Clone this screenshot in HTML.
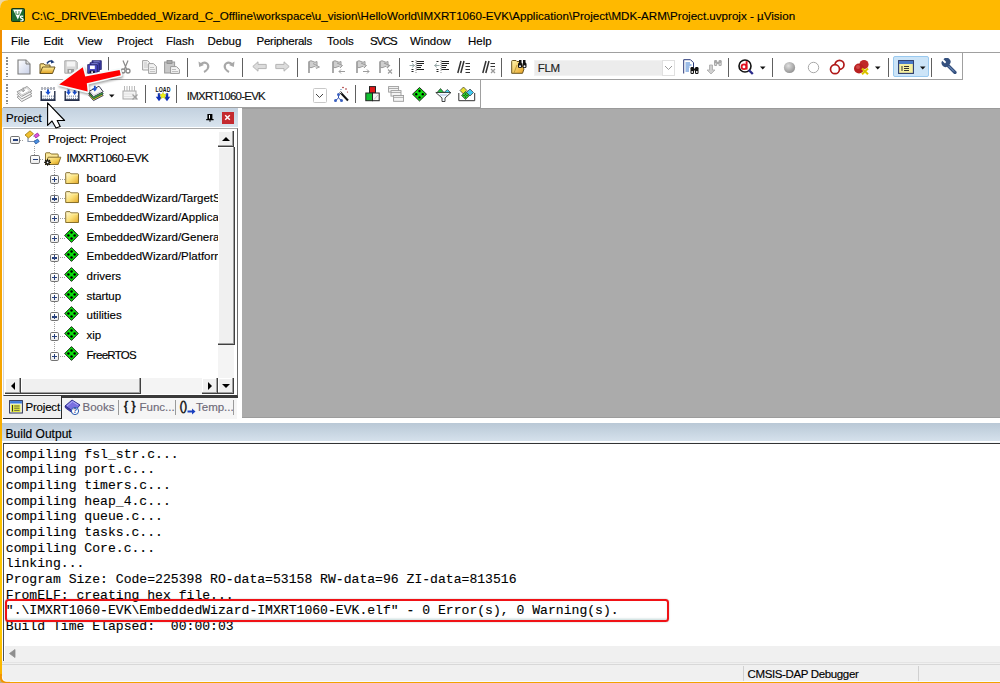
<!DOCTYPE html>
<html><head><meta charset="utf-8">
<style>
*{margin:0;padding:0;box-sizing:border-box}
html,body{width:1000px;height:683px;overflow:hidden;background:#fff}
body{position:relative;font-family:"Liberation Sans",sans-serif;color:#000}
.a{position:absolute}
.t{position:absolute;white-space:pre;line-height:1;-webkit-text-stroke:0.15px currentColor}
#title{left:0;top:0;width:1000px;height:30px;background:#FFB900}
#menu{left:0;top:30px;width:1000px;height:22px;background:#fff}
.mi{position:absolute;top:36px;font-size:11.5px;white-space:pre;line-height:1;-webkit-text-stroke:0.15px #000}
.sep{position:absolute;width:1px;background:#6d6d6d}
.grip{position:absolute;width:1.6px;background:repeating-linear-gradient(to bottom,#8c8c8c 0 1.6px,transparent 1.6px 3.2px)}
.sb{background:#f0f0f0;border-right:1.3px solid #404040;border-bottom:1.3px solid #404040;box-shadow:inset -1px -1px 0 #a0a0a0, inset 1px 1px 0 #fff}
.xb{width:9.2px;height:8.8px;border:1.5px solid #737373;border-radius:1.8px;background:linear-gradient(#fff,#ececec)}
.dv{width:1px;background:repeating-linear-gradient(to bottom,#a0a0a0 0 1px,transparent 1px 2px)}
.dh{height:1px;background:repeating-linear-gradient(to right,#a0a0a0 0 1px,transparent 1px 2px)}
.tree{position:absolute;font-size:11.5px;white-space:pre;line-height:1;-webkit-text-stroke:0.15px #000}
.out{position:absolute;left:5.8px;font-family:"Liberation Mono",monospace;font-size:13.1px;white-space:pre;line-height:15.69px;color:#000;-webkit-text-stroke:0.12px #000}
</style></head><body>

<!-- title bar -->
<div id="title" class="a"></div>
<svg class="a" style="left:10.5px;top:7.6px" width="14" height="14" viewBox="0 0 14 14">
<rect x="0.5" y="0.5" width="13" height="13" rx="1" fill="#1d6a30" stroke="#0a2a10" stroke-width="0.9"/>
<path d="M2 1.5H11.5L6.8 11.5Z" fill="#fff"/>
<path d="M5 3v3.5M5.2 6q1.5 0.8 2.8 0M8 3v3.5" stroke="#2a7a3a" stroke-width="0.9" fill="none"/>
<path d="M12.2 8.3q-2.5-0.8-2.8 0.8q0.2 1.2 1.5 1.4q1.4 0.3 1.2 1.5q-0.6 1.3-2.8 0.8" stroke="#fff" stroke-width="1.3" fill="none"/>
</svg>
<div class="t" style="left:31.5px;top:9.5px;font-size:11.6px;color:#000">C:\C_DRIVE\Embedded_Wizard_C_Offline\workspace\u_vision\HelloWorld\IMXRT1060-EVK\Application\Project\MDK-ARM\Project.uvprojx - µVision</div>

<!-- menu -->
<div id="menu" class="a"></div>
<div class="a" style="left:0;top:52px;width:1000px;height:1px;background:#a0a0a0"></div>
<div class="mi" style="left:11px">File</div>
<div class="mi" style="left:43.5px">Edit</div>
<div class="mi" style="left:77.5px">View</div>
<div class="mi" style="left:117px">Project</div>
<div class="mi" style="left:166px">Flash</div>
<div class="mi" style="left:207.5px">Debug</div>
<div class="mi" style="left:256.5px;letter-spacing:-0.25px">Peripherals</div>
<div class="mi" style="left:327px">Tools</div>
<div class="mi" style="left:370px;letter-spacing:-1.2px">SVCS</div>
<div class="mi" style="left:410px">Window</div>
<div class="mi" style="left:468px">Help</div>

<!-- toolbars -->
<div class="a" style="left:3px;top:79px;width:959px;height:1px;background:#a0a0a0"></div>
<div class="a" style="left:962px;top:53px;width:1px;height:27px;background:#a0a0a0"></div>
<div class="a" style="left:3px;top:106.5px;width:477.5px;height:1px;background:#a0a0a0"></div>
<div class="a" style="left:480.3px;top:80px;width:1px;height:27.5px;background:#a0a0a0"></div>
<div class="grip" style="left:6px;top:57px;height:20px"></div>
<div class="grip" style="left:6px;top:84px;height:20px"></div>

<svg class="a" style="left:17px;top:58.5px" width="14" height="16" viewBox="0 0 14 16"><defs><linearGradient id="nf" x1="0" y1="0" x2="1" y2="1"><stop offset="0" stop-color="#ffffff"/><stop offset="1" stop-color="#c8d0e8"/></linearGradient></defs><path d="M1 15V1H9L13 5V15Z" fill="url(#nf)" stroke="#7a7a7a" stroke-width="1.1"/><path d="M9 1V5H13" fill="#e0e0e0" stroke="#7a7a7a" stroke-width="1"/></svg>
<svg class="a" style="left:39px;top:58.5px" width="17" height="16" viewBox="0 0 17 16"><defs><linearGradient id="of" x1="0" y1="0" x2="0" y2="1"><stop offset="0" stop-color="#fff0a0"/><stop offset="1" stop-color="#e0a020"/></linearGradient></defs><path d="M1 14.5V5.5Q1 4.8 1.7 4.8H5L6 6H11V8" fill="#fbe38a" stroke="#6b5520" stroke-width="1"/><path d="M1 14.5L3.6 8H16L13.5 14.5Z" fill="url(#of)" stroke="#6b5520" stroke-width="1"/><path d="M8 4.5Q10 0.8 13.5 2.5" stroke="#1d3d7a" stroke-width="1.6" fill="none"/><path d="M12.2 0.8L15.6 3.2L12 4.6Z" fill="#1d3d7a"/></svg>
<svg class="a" style="left:64px;top:59.5px" width="14" height="14" viewBox="0 0 14 14"><path d="M0.8 13.2V0.8H11.6L13.2 2.4V13.2Z" fill="#d8d8d8" stroke="#a8a8a8" stroke-width="1"/><rect x="3" y="1.5" width="8" height="5" fill="#f4f4f4"/><rect x="3.5" y="9" width="6.5" height="4" fill="#9a9a9a"/><rect x="5" y="10" width="2" height="2.5" fill="#e8e8e8"/></svg>
<svg class="a" style="left:87px;top:59.5px" width="15" height="14" viewBox="0 0 15 14"><path d="M5 8V0.7H14.3V9.5H12Z" fill="#3a3aa0" stroke="#22226a" stroke-width="0.8"/><rect x="6.5" y="1.6" width="6" height="1.3" fill="#b8c0ff"/><path d="M3 10V2.7H12.3V11.5H10Z" fill="#4242ae" stroke="#22226a" stroke-width="0.8"/><rect x="4.5" y="3.6" width="6" height="1.3" fill="#c0c8ff"/><path d="M0.7 13.3V4.6H10.3V13.3Z" fill="#4a4ac0" stroke="#1e1e60" stroke-width="0.8"/><rect x="3" y="5.6" width="4.8" height="3.4" fill="#fff"/><rect x="2.6" y="10.6" width="5.2" height="2.7" fill="#101030"/><rect x="4.2" y="11.3" width="1.8" height="1.6" fill="#eee"/></svg>
<div class="a" style="left:108.10px;top:57px;width:1.1px;height:20px;background:#606060"></div>
<svg class="a" style="left:120px;top:59.5px" width="11" height="14" viewBox="0 0 11 14"><path d="M3 0.5L6.5 9M8 0.5L4.5 9" stroke="#8a8a8a" stroke-width="1.2" fill="none"/><circle cx="3" cy="11" r="2" fill="none" stroke="#8a8a8a" stroke-width="1.3"/><circle cx="8" cy="11" r="2" fill="none" stroke="#8a8a8a" stroke-width="1.3"/></svg>
<svg class="a" style="left:142px;top:59.5px" width="16" height="14" viewBox="0 0 16 14"><path d="M0.6 10V0.6H5.5L7.5 2.6V10Z" fill="#f2f2f2" stroke="#a0a0a0" stroke-width="1"/><path d="M6.6 13.4V3.6H11.5L14.4 6.5V13.4Z" fill="#f2f2f2" stroke="#a0a0a0" stroke-width="1"/><path d="M8 7.5h4M8 9.5h5M8 11.5h5M2 3h3M2 5h4M2 7h4" stroke="#b8b8b8" stroke-width="0.8"/></svg>
<svg class="a" style="left:164px;top:59.5px" width="17" height="14" viewBox="0 0 17 14"><rect x="0.6" y="2" width="10" height="11" fill="#c8c8c8" stroke="#9a9a9a" stroke-width="1"/><rect x="3" y="0.5" width="5" height="3" fill="#a8a8a8" stroke="#8a8a8a" stroke-width="0.8"/><path d="M6.6 13.4V6.6H12.5L15.4 9.5V13.4Z" fill="#f4f4f4" stroke="#9a9a9a" stroke-width="1"/><path d="M8 9.5h4M8 11.5h6" stroke="#b0b0b0" stroke-width="0.8"/></svg>
<div class="a" style="left:186.50px;top:57.5px;width:1.1px;height:19.0px;background:#606060"></div>
<svg class="a" style="left:197.5px;top:60px" width="13" height="13" viewBox="0 0 13 13"><path d="M3 4Q6 1.5 9 3.5Q11.5 6 9.5 9Q8 11 6 12" stroke="#a8a8a8" stroke-width="2" fill="none"/><path d="M0.5 1.5L1.2 7L6 5Z" fill="#a8a8a8"/></svg>
<svg class="a" style="left:222px;top:60px" width="13" height="13" viewBox="0 0 13 13"><path d="M10 4Q7 1.5 4 3.5Q1.5 6 3.5 9Q5 11 7 12" stroke="#a8a8a8" stroke-width="2" fill="none"/><path d="M12.5 1.5L11.8 7L7 5Z" fill="#a8a8a8"/></svg>
<div class="a" style="left:241.90px;top:57.5px;width:1.1px;height:19.0px;background:#606060"></div>
<svg class="a" style="left:252px;top:60.5px" width="15" height="11" viewBox="0 0 15 11"><path d="M0.8 5.5L6 0.8V3.4H14.2V7.6H6V10.2Z" fill="#dcdcdc" stroke="#b4b4b4" stroke-width="1"/></svg>
<svg class="a" style="left:275px;top:60.5px" width="15" height="11" viewBox="0 0 15 11"><path d="M14.2 5.5L9 0.8V3.4H0.8V7.6H9V10.2Z" fill="#dcdcdc" stroke="#b4b4b4" stroke-width="1"/></svg>
<div class="a" style="left:296.90px;top:57.5px;width:1.1px;height:19.0px;background:#606060"></div>
<svg class="a" style="left:306.5px;top:59.5px" width="15" height="14" viewBox="0 0 15 14"><path d="M2 13V1.5Q4 0 6 1.5T10 1.5V7Q8 5.5 6 7T2 7" fill="#cfcfcf" stroke="#9c9c9c" stroke-width="1"/><path d="M2 1.5V13" stroke="#9c9c9c" stroke-width="1.4"/><path d="M6 3.5L12.5 7L9 8.5" fill="#cfcfcf" stroke="#9c9c9c" stroke-width="0.9"/></svg>
<svg class="a" style="left:330.5px;top:59.5px" width="15" height="14" viewBox="0 0 15 14"><path d="M2 13V1.5Q4 0 6 1.5T10 1.5V7Q8 5.5 6 7T2 7" fill="#cfcfcf" stroke="#9c9c9c" stroke-width="1"/><path d="M2 1.5V13" stroke="#9c9c9c" stroke-width="1.4"/><path d="M6 3L11.5 5.5L9 8M8 11.5h6M8 11.5l2-2M8 11.5l2 2" fill="#cfcfcf" stroke="#9c9c9c" stroke-width="1"/></svg>
<svg class="a" style="left:354.5px;top:59.5px" width="15" height="14" viewBox="0 0 15 14"><path d="M2 13V1.5Q4 0 6 1.5T10 1.5V7Q8 5.5 6 7T2 7" fill="#cfcfcf" stroke="#9c9c9c" stroke-width="1"/><path d="M2 1.5V13" stroke="#9c9c9c" stroke-width="1.4"/><path d="M6 3L11.5 5.5L9 8M8 11.5h6M14 11.5l-2-2M14 11.5l-2 2" fill="#cfcfcf" stroke="#9c9c9c" stroke-width="1"/></svg>
<svg class="a" style="left:377.5px;top:59.5px" width="16" height="14" viewBox="0 0 16 14"><path d="M2 13V1.5Q4 0 6 1.5T10 1.5V7Q8 5.5 6 7T2 7" fill="#cfcfcf" stroke="#9c9c9c" stroke-width="1"/><path d="M2 1.5V13" stroke="#9c9c9c" stroke-width="1.4"/><path d="M6 3L11.5 5.5L9 8M10 9.5l4 4M14 9.5l-4 4" fill="#cfcfcf" stroke="#9c9c9c" stroke-width="1.1"/></svg>
<div class="a" style="left:398.90px;top:57.5px;width:1.1px;height:19.0px;background:#606060"></div>
<svg class="a" style="left:409px;top:59px" width="16" height="15" viewBox="0 0 16 15"><path d="M7 1V14" stroke="#777" stroke-width="0.8" stroke-dasharray="1 1"/><path d="M2.5 2.5H4.5M7.5 2.5H15M7.5 4.5H15M7.5 6.5H13M7.5 8.5H12M2.5 10.5H4.5M7.5 10.5H15M2.5 12.5H4.5" stroke="#222" stroke-width="1.2"/><path d="M0.5 6.5H5.5M5.5 6.5L3 4.5M5.5 6.5L3 8.5" stroke="#9aa" stroke-width="1"/></svg>
<svg class="a" style="left:433.5px;top:59px" width="16" height="15" viewBox="0 0 16 15"><path d="M7 1V14" stroke="#777" stroke-width="0.8" stroke-dasharray="1 1"/><path d="M2.5 2.5H4.5M7.5 2.5H15M7.5 4.5H15M7.5 6.5H13M7.5 8.5H12M2.5 10.5H4.5M7.5 10.5H15M2.5 12.5H4.5" stroke="#222" stroke-width="1.2"/><path d="M0.5 6.5H5.5M0.5 6.5L3 4.5M0.5 6.5L3 8.5" stroke="#9aa" stroke-width="1"/></svg>
<svg class="a" style="left:457px;top:59.5px" width="15" height="14" viewBox="0 0 15 14"><path d="M0.8 13L4 1M3.8 13L7 1" stroke="#333" stroke-width="1.5"/><path d="M8.5 3.5H13M8.5 6.5H13M8.5 9.5H13M8.5 12.5H13" stroke="#333" stroke-width="1.1"/></svg>
<svg class="a" style="left:481.5px;top:59.5px" width="15" height="14" viewBox="0 0 15 14"><path d="M0.8 13L4 1M3.8 13L7 1" stroke="#333" stroke-width="1.5"/><path d="M8.5 3.5H13M8.5 6.5H13" stroke="#333" stroke-width="1.1"/><path d="M9 9l4 4M13 9l-4 4" stroke="#999" stroke-width="1.3"/></svg>
<div class="a" style="left:501.20px;top:57.5px;width:1.1px;height:19.0px;background:#606060"></div>
<svg class="a" style="left:511px;top:59px" width="17" height="15" viewBox="0 0 17 15"><defs><linearGradient id="ff" x1="0" y1="0" x2="1" y2="1"><stop offset="0" stop-color="#fff8b0"/><stop offset="1" stop-color="#e8a020"/></linearGradient></defs><path d="M0.7 14.3V2.3Q0.7 1.5 1.5 1.5H5L6 2.5H9L13 10L11.5 14.3Z" fill="url(#ff)" stroke="#6b5520" stroke-width="1"/><path d="M3 14L6 6" stroke="#b09030" stroke-width="0.8"/><g fill="#111"><rect x="8" y="1" width="2.5" height="3"/><rect x="12" y="1" width="2.5" height="3"/><rect x="7" y="3.5" width="4" height="5.5" rx="1.5"/><rect x="11.5" y="3.5" width="4" height="5.5" rx="1.5"/></g><circle cx="9" cy="7.2" r="1" fill="#fff"/><circle cx="13.5" cy="7.2" r="1" fill="#fff"/></svg>
<div class="a" style="left:533.5px;top:60.3px;width:129px;height:16px;background:#ececec;border:1px solid #f2f2f2"></div>
<div class="a" style="left:662px;top:60.3px;width:13px;height:16px;background:#fff;border:1px solid #e0e0e0"></div>
<svg class="a" style="left:664px;top:65px" width="9" height="6" viewBox="0 0 9 6"><path d="M1 1L4.5 4.5L8 1" stroke="#9a9a9a" stroke-width="1" fill="none"/></svg>
<div class="t" style="left:537.8px;top:62.7px;font-size:11.5px;color:#222;letter-spacing:-0.4px">FLM</div>
<svg class="a" style="left:682.5px;top:58.5px" width="17" height="16" viewBox="0 0 17 16"><path d="M0.7 14.5V0.7H7.5L10.5 3.7V9" fill="#fff" stroke="#2a3a7a" stroke-width="1"/><path d="M2.5 4H7M2.5 6H8.5M2.5 8H6.5M2.5 10H6M2.5 12H6" stroke="#3a7ad0" stroke-width="1.1"/><g fill="#111"><rect x="7.5" y="8" width="3.5" height="7" rx="1.2"/><rect x="12" y="8" width="3.5" height="7" rx="1.2"/><rect x="10" y="9.5" width="3" height="2"/></g><circle cx="9.2" cy="13" r="0.9" fill="#fff"/><circle cx="13.8" cy="13" r="0.9" fill="#fff"/></svg>
<svg class="a" style="left:705.5px;top:58.5px" width="17" height="16" viewBox="0 0 17 16"><path d="M3.5 6V11H1L5 15L9 11H6.5V6Z" fill="#d0d0d0" stroke="#aaa" stroke-width="0.8"/><g fill="#a8a8a8"><rect x="8" y="1" width="3.2" height="6" rx="1.2"/><rect x="12.5" y="1" width="3.2" height="6" rx="1.2"/><rect x="10" y="3" width="3" height="2"/></g><circle cx="9.6" cy="5" r="0.8" fill="#eee"/><circle cx="14.1" cy="5" r="0.8" fill="#eee"/></svg>
<div class="a" style="left:727.70px;top:57.5px;width:1.1px;height:19.0px;background:#606060"></div>
<svg class="a" style="left:737.5px;top:58.5px" width="17" height="16" viewBox="0 0 17 16"><circle cx="7" cy="7" r="6" fill="#fff" stroke="#111" stroke-width="1.6"/><path d="M10.8 11L14.8 15" stroke="#2a2a8a" stroke-width="2.4"/><path d="M8.6 2.2V10.5" stroke="#e01020" stroke-width="1.9"/><circle cx="6" cy="7.8" r="2.4" fill="none" stroke="#e01020" stroke-width="1.8"/></svg>
<svg class="a" style="left:760px;top:65.5px" width="6" height="4" viewBox="0 0 6 4"><path d="M0 0.5h5.5L2.75 3.5z" fill="#111"/></svg>
<div class="a" style="left:771.90px;top:57.5px;width:1.1px;height:19.0px;background:#606060"></div>
<svg class="a" style="left:783px;top:60.5px" width="13" height="13" viewBox="0 0 13 13"><defs><radialGradient id="gc" cx=".4" cy=".35" r=".7"><stop offset="0" stop-color="#e0e0e0"/><stop offset="1" stop-color="#8e8e8e"/></radialGradient></defs><circle cx="6.5" cy="6.5" r="5.6" fill="url(#gc)"/></svg>
<svg class="a" style="left:807px;top:60.5px" width="13" height="13" viewBox="0 0 13 13"><circle cx="6.5" cy="6.5" r="5.2" fill="#fff" stroke="#a8a8a8" stroke-width="1"/></svg>
<svg class="a" style="left:828.5px;top:58.5px" width="17" height="16" viewBox="0 0 17 16"><circle cx="10.5" cy="5.8" r="4.5" fill="none" stroke="#b01818" stroke-width="1.7"/><circle cx="6" cy="10.2" r="4.5" fill="#fff" stroke="#b01818" stroke-width="1.7"/></svg>
<svg class="a" style="left:852.5px;top:58.5px" width="18" height="16" viewBox="0 0 18 16"><circle cx="11" cy="5.5" r="4.6" fill="#c02828"/><circle cx="6" cy="9.5" r="5" fill="#b82020"/><circle cx="5" cy="8" r="2" fill="#e06060" opacity=".6"/><path d="M9 9.5L15 15.2M15 9.5L9 15.2" stroke="#e8d000" stroke-width="2.2"/><path d="M9 9.5L15 15.2M15 9.5L9 15.2" stroke="#7a6a00" stroke-width="0.5" opacity=".5"/></svg>
<svg class="a" style="left:875px;top:65.5px" width="6" height="4" viewBox="0 0 6 4"><path d="M0 0.5h5.5L2.75 3.5z" fill="#111"/></svg>
<div class="a" style="left:887.50px;top:57.5px;width:1.1px;height:19.0px;background:#606060"></div>
<div class="a" style="left:893px;top:55.6px;width:36px;height:21.5px;background:#cce4f7;border:1px solid #99c9ef;border-radius:2px"></div>
<svg class="a" style="left:897.5px;top:59.5px" width="16" height="14" viewBox="0 0 16 14"><rect x="0.6" y="0.6" width="14.8" height="12.8" fill="#f6f0a0" stroke="#2a3a6a" stroke-width="1.1"/><rect x="1" y="1" width="14" height="3" fill="#4a7ac8"/><path d="M4 6v5M6 6.5h5M6 8.5h5M6 10.5h5" stroke="#333" stroke-width="1"/></svg>
<svg class="a" style="left:919.5px;top:65.5px" width="6" height="4" viewBox="0 0 6 4"><path d="M0 0.5h5.5L2.75 3.5z" fill="#111"/></svg>
<div class="a" style="left:931.10px;top:57.5px;width:1.1px;height:19.0px;background:#606060"></div>
<svg class="a" style="left:941px;top:58px" width="16" height="16" viewBox="0 0 16 16"><g transform="translate(16,0) scale(-1,1)"><path d="M2 14.5L9 7.5" stroke="#34507e" stroke-width="3.2" stroke-linecap="round"/><path d="M7.5 6.5A4 4 0 0 1 13.5 1.2L10.8 4L12 5.5L14.8 2.8A4 4 0 0 1 9.5 8.5Z" fill="#34507e"/><path d="M3 13.5L8.5 8" stroke="#8aa8d8" stroke-width="0.9"/></g></svg>
<svg class="a" style="left:15.5px;top:85.5px" width="17" height="17" viewBox="0 0 17 17"><g fill="#f6f6f6" stroke="#8c8c8c" stroke-width="0.9" stroke-linejoin="round"><path d="M1.1 11L11 5.7L15.9 10.1L5.7 15.6Z"/><path d="M1.1 8.4L11 3.1L15.9 7.5L5.7 13Z"/><path d="M1.1 5.8L11 0.5L15.9 4.9L5.7 10.4Z"/></g><path d="M3.2 6L10.6 2.1L13.6 4.9L6 8.9Z" fill="#fff" stroke="#b0b0b0" stroke-width="0.6"/><path d="M7.2 1.5V5.5M5.6 4L7.2 5.8L8.8 4" stroke="#999" stroke-width="1" fill="none"/></svg>
<svg class="a" style="left:39.5px;top:85.5px" width="16" height="15" viewBox="0 0 16 15"><path d="M1.2 5V14H14.8V5" fill="#fff" stroke="#1a2440" stroke-width="1.35"/><path d="M0.6 14.3H15.4" stroke="#1a2440" stroke-width="1"/><g fill="#6a7898"><rect x="2.6" y="9.6" width="1.1" height="1.1"/><rect x="4.7" y="9.6" width="1.1" height="1.1"/><rect x="6.8" y="9.6" width="1.1" height="1.1"/><rect x="8.9" y="9.6" width="1.1" height="1.1"/><rect x="11.0" y="9.6" width="1.1" height="1.1"/><rect x="13.1" y="9.6" width="1.1" height="1.1"/><rect x="2.6" y="11.8" width="1.1" height="1.1"/><rect x="4.7" y="11.8" width="1.1" height="1.1"/><rect x="6.8" y="11.8" width="1.1" height="1.1"/><rect x="8.9" y="11.8" width="1.1" height="1.1"/><rect x="11.0" y="11.8" width="1.1" height="1.1"/><rect x="13.1" y="11.8" width="1.1" height="1.1"/></g><path d="M2 1V4M5 1V4M8 1V4M11 1V4M14 1V4" stroke="#5a6070" stroke-width="0.9"/><path d="M3.5 2.5h0.8M6.5 2.5h0.8M9.5 2.5h0.8M12.5 2.5h0.8" stroke="#9aa0b0" stroke-width="0.8"/><path d="M8 3.5V6.5" stroke="#1a50d0" stroke-width="2"/><path d="M5.2 5.8H10.8L8 9Z" fill="#1a50d0"/></svg>
<svg class="a" style="left:63.5px;top:85.5px" width="16" height="15" viewBox="0 0 16 15"><path d="M1.2 5V14H14.8V5" fill="#fff" stroke="#1a2440" stroke-width="1.35"/><path d="M0.6 14.3H15.4" stroke="#1a2440" stroke-width="1"/><g fill="#6a7898"><rect x="2.6" y="9.6" width="1.1" height="1.1"/><rect x="4.7" y="9.6" width="1.1" height="1.1"/><rect x="6.8" y="9.6" width="1.1" height="1.1"/><rect x="8.9" y="9.6" width="1.1" height="1.1"/><rect x="11.0" y="9.6" width="1.1" height="1.1"/><rect x="13.1" y="9.6" width="1.1" height="1.1"/><rect x="2.6" y="11.8" width="1.1" height="1.1"/><rect x="4.7" y="11.8" width="1.1" height="1.1"/><rect x="6.8" y="11.8" width="1.1" height="1.1"/><rect x="8.9" y="11.8" width="1.1" height="1.1"/><rect x="11.0" y="11.8" width="1.1" height="1.1"/><rect x="13.1" y="11.8" width="1.1" height="1.1"/></g><path d="M3 2h10" stroke="#9aa0b0" stroke-width="0.8" stroke-dasharray="1 1.5"/><path d="M4.5 3.5V6.5M10.7 3.5V6.5" stroke="#1a50d0" stroke-width="2"/><path d="M2 5.8H7L4.5 9ZM8.2 5.8H13.2L10.7 9Z" fill="#1a50d0"/></svg>
<svg class="a" style="left:88px;top:85px" width="16" height="17" viewBox="0 0 16 17"><path d="M0.8 10.2L5.5 15.6L15.2 10.5L10.5 5.2Z" fill="#e8e030" stroke="#30305a" stroke-width="0.9" stroke-linejoin="round"/><path d="M0.8 8.4L5.5 13.8L15.2 8.7L10.5 3.4Z" fill="#40b040" stroke="#204a30" stroke-width="0.9" stroke-linejoin="round"/><path d="M0.8 6.4L5.5 11.8L15.2 6.7L11 1.2Z" fill="#f8f8f8" stroke="#3a3a50" stroke-width="1" stroke-linejoin="round"/><path d="M2.5 6.5L5.8 10.2L13 6.5" stroke="#c8c8d0" stroke-width="0.8" fill="none"/><path d="M6.8 0.8V3.8" stroke="#1a50d0" stroke-width="1.8"/><path d="M4.2 3.2H9.4L6.8 6.4Z" fill="#1a50d0"/></svg>
<svg class="a" style="left:108.5px;top:93.5px" width="6" height="4" viewBox="0 0 6 4"><path d="M0 0.5h5.5L2.75 3.5z" fill="#111"/></svg>
<svg class="a" style="left:122px;top:85px" width="17" height="16" viewBox="0 0 17 16"><rect x="1" y="6" width="13" height="8" fill="#f4f4f4" stroke="#a8a8a8" stroke-width="1"/><path d="M2.5 1V6M5 1V6M7.5 1V6M10 1V6M12.5 1V6" stroke="#b8b8b8" stroke-width="1"/><path d="M2.5 9h10M2.5 11.5h10" stroke="#c8c8c8" stroke-width="0.8" stroke-dasharray="1 1"/><path d="M10.5 9.5L15.5 14.5M15.5 9.5L10.5 14.5" stroke="#a0a0a0" stroke-width="1.3"/></svg>
<div class="a" style="left:144.50px;top:84.5px;width:1.1px;height:18.5px;background:#606060"></div>
<svg class="a" style="left:154.5px;top:85.5px" width="16" height="16" viewBox="0 0 16 16"><text x="8" y="6" font-family="Liberation Sans" font-weight="bold" font-size="6.6" text-anchor="middle" fill="#111" letter-spacing="0.1" textLength="15" lengthAdjust="spacingAndGlyphs">LOAD</text><path d="M4 7.3V11.5M12 7.3V11.5" stroke="#1030b8" stroke-width="2.4"/><path d="M0.8 10.8H7.4L4 15.3ZM8.6 10.8H15.2L12 15.3Z" fill="#1030b8"/><path d="M8 6.3L9.1 8.3L11.4 8.6L9.8 10.2L10.3 12.6L8 11.4L5.7 12.6L6.2 10.2L4.6 8.6L6.9 8.3Z" fill="#eef010" stroke="#b0b010" stroke-width="0.4"/></svg>
<div class="a" style="left:175.70px;top:84.5px;width:1.1px;height:18.5px;background:#606060"></div>
<div class="t" style="left:186.8px;top:90.9px;font-size:11.5px;color:#111;letter-spacing:-0.75px">IMXRT1060-EVK</div>
<div class="a" style="left:312.5px;top:88px;width:14px;height:15px;background:#fff;border:1px solid #c8c8c8;border-radius:1.5px"></div>
<svg class="a" style="left:315px;top:93px" width="9" height="6" viewBox="0 0 9 6"><path d="M1 1L4.5 4.5L8 1" stroke="#444" stroke-width="1" fill="none"/></svg>
<svg class="a" style="left:333px;top:85.5px" width="17" height="16.5" viewBox="0 0 17 16.5"><path d="M7 6L15 14.5" stroke="#111" stroke-width="2"/><path d="M6 5.2L8.4 7.4" stroke="#fff" stroke-width="1"/><circle cx="10" cy="1.5" r="0.8" fill="#a02020"/><circle cx="13" cy="3" r="0.8" fill="#a02020"/><circle cx="8" cy="3.5" r="0.6" fill="#2060a0"/><circle cx="14.5" cy="6" r="0.6" fill="#a02020"/><path d="M5.5 9V12M5.5 12L2.5 14.5M5.5 12L8.5 14.5" stroke="#3050b0" stroke-width="1"/><circle cx="5.5" cy="8.5" r="1.5" fill="#3a60c0"/><circle cx="2.5" cy="14.5" r="1.5" fill="#3a60c0"/><circle cx="8.5" cy="14.5" r="1.5" fill="#3a60c0"/></svg>
<div class="a" style="left:354.90px;top:85px;width:1.1px;height:18px;background:#606060"></div>
<svg class="a" style="left:365px;top:86px" width="15.5" height="15.5" viewBox="0 0 15.5 15.5"><rect x="4.5" y="0.6" width="6" height="6.5" fill="#e01818" stroke="#222" stroke-width="1"/><rect x="0.8" y="7" width="6.7" height="7.7" fill="#10c030" stroke="#222" stroke-width="1"/><rect x="7.5" y="7" width="6.7" height="7.7" fill="#f4f4f4" stroke="#222" stroke-width="1"/><path d="M9 13.5L13 9" stroke="#aaa" stroke-width="0.6"/></svg>
<svg class="a" style="left:387.5px;top:85.5px" width="16.5" height="16" viewBox="0 0 16.5 16"><g fill="#f4f4f4" stroke="#9a9a9a" stroke-width="0.9"><rect x="0.6" y="0.6" width="10" height="5.5"/><rect x="3" y="4.6" width="10" height="5.5"/><rect x="5.6" y="9.5" width="10" height="5.8"/></g><path d="M0.6 2.5h10M3 6.5h10M5.6 11.4h10" stroke="#9a9a9a" stroke-width="0.8"/></svg>
<svg class="a" style="left:412px;top:87px" width="15" height="14.5" viewBox="0 0 15 14.5"><path d="M7.5 0.5L14.5 7.2L7.5 14L0.5 7.2Z" fill="#10dd10" stroke="#111" stroke-width="0.9"/><circle cx="7.5" cy="4" r="1.2"/><circle cx="4.2" cy="7.2" r="1.2"/><circle cx="10.8" cy="7.2" r="1.2"/><circle cx="7.5" cy="10.4" r="1.2"/></svg>
<svg class="a" style="left:435px;top:86.5px" width="17" height="15" viewBox="0 0 17 15"><path d="M0.8 5.5H16L10 11V14.5H7V11Z" fill="#f4fcff" stroke="#333" stroke-width="0.9"/><path d="M2 5.5L5.5 1.5L9 5.5Z" fill="#20c040" stroke="#333" stroke-width="0.7"/><path d="M9 5.5L12.5 2.5L15.5 5.5Z" fill="#40c8e8" stroke="#333" stroke-width="0.7"/><path d="M5 8L12 8" stroke="#9ad" stroke-width="0.8"/></svg>
<svg class="a" style="left:458px;top:86px" width="17.5" height="15.5" viewBox="0 0 17.5 15.5"><path d="M0.8 7V14.7H16.7V7" fill="#fff" stroke="#333" stroke-width="1"/><path d="M5.5 1L9 4.5L5.5 8L2 4.5Z" fill="#e8e030" stroke="#333" stroke-width="0.7"/><path d="M12 3L15.5 6.5L12 10L8.5 6.5Z" fill="#40c8f0" stroke="#333" stroke-width="0.7"/><path d="M7.5 5.5L11.5 9.5L7.5 13.5L3.5 9.5Z" fill="#30d030" stroke="#333" stroke-width="0.7"/><circle cx="7.5" cy="8" r="0.6"/><circle cx="6" cy="9.5" r="0.6"/><circle cx="9" cy="9.5" r="0.6"/><circle cx="7.5" cy="11" r="0.6"/></svg>
<!-- project panel -->
<div class="a" style="left:2px;top:107.5px;width:236px;height:19px;background:linear-gradient(#c3d1df,#d9e4ee)"></div>
<div class="t" style="left:6px;top:113px;font-size:11.5px">Project</div>
<svg class="a" style="left:205px;top:113px" width="10" height="10" viewBox="0 0 10 10"><path d="M2.4 1H7.4V6H8.6V7.2H5.5V8.8H4.5V7.2H1.2V6H2.4Z" fill="#000"/><rect x="4" y="2" width="1" height="3.6" fill="#fff"/></svg>
<div class="a" style="left:222px;top:112px;width:12px;height:12px;background:#c42a2f"></div>
<svg class="a" style="left:222px;top:112px" width="12" height="12" viewBox="0 0 12 12"><path d="M3.2 3.2l4.6 4.6M7.8 3.2l-4.6 4.6" stroke="#fff" stroke-width="1.45"/></svg>
<div class="a" style="left:2px;top:126.5px;width:236px;height:1.5px;background:#fff"></div>
<div class="a" style="left:2.5px;top:128px;width:235px;height:268px;border-top:1px solid #a9a9a9;border-right:1px solid #6b6b6b;border-bottom:1.5px solid #3a3a3a;border-left:1px solid #d6d6d6;background:#fff"></div>
<!-- v scrollbar -->
<div class="a" style="left:218px;top:131px;width:16px;height:247px;background:#f4f4f4"></div>
<div class="a sb" style="left:218px;top:131px;width:16px;height:16px"></div>
<svg class="a" style="left:218px;top:131px" width="16" height="16"><path d="M4 10h8l-4-4z" fill="#000"/></svg>
<div class="a sb" style="left:218px;top:147px;width:16.5px;height:197.5px"></div>
<div class="a sb" style="left:218px;top:378px;width:16px;height:16px"></div>
<svg class="a" style="left:218px;top:378px" width="16" height="16"><path d="M4 6h8l-4 4z" fill="#000"/></svg>
<!-- h scrollbar -->
<div class="a" style="left:4.5px;top:378px;width:213.5px;height:16px;background:#f4f4f4"></div>
<div class="a sb" style="left:4.5px;top:378px;width:16px;height:16px"></div>
<svg class="a" style="left:4.5px;top:378px" width="16" height="16"><path d="M10 4v8l-4-4z" fill="#000"/></svg>
<div class="a sb" style="left:20.5px;top:378px;width:120px;height:16px"></div>
<div class="a sb" style="left:202px;top:378px;width:16px;height:16px"></div>
<svg class="a" style="left:202px;top:378px" width="16" height="16"><path d="M6 4v8l4-4z" fill="#000"/></svg>
<!-- tabs -->
<div class="a" style="left:3px;top:396px;width:234px;height:23px;background:#f5f5f5"></div>
<div class="a" style="left:61px;top:396px;width:177px;height:1.5px;background:#3a3a3a"></div>
<div class="a" style="left:3px;top:396px;width:58.5px;height:22.5px;background:#efefef;border-right:1.5px solid #2a2a2a;border-bottom:1.5px solid #2a2a2a"></div>
<svg class="a" style="left:8.5px;top:399.5px" width="14" height="14" viewBox="0 0 14 14"><rect x="0.6" y="0.6" width="12.8" height="12.4" fill="#f8f8f0" stroke="#2a3050" stroke-width="1"/><rect x="1.1" y="1.1" width="11.8" height="2.4" fill="#3a78d8"/><rect x="2" y="4.5" width="9.5" height="7.5" fill="#e4ec40"/><path d="M3.5 5v6.5" stroke="#333" stroke-width="1"/><path d="M5.2 6h5.3M5.2 8.2h5.3M5.2 10.4h5.3" stroke="#444" stroke-width="0.8"/></svg>
<div class="t" style="left:25.5px;top:401.5px;font-size:11.5px;letter-spacing:-0.2px">Project</div>
<svg class="a" style="left:64px;top:398.5px" width="17" height="16" viewBox="0 0 17 16"><path d="M1 7L8 1L16 6L10 13Z" fill="#7a70e0" stroke="#2a2a8a" stroke-width="0.9"/><path d="M1 7L1.5 9L10 15L10 13Z" fill="#4a40b0" stroke="#2a2a8a" stroke-width="0.8"/><path d="M3 7L8.5 2.5L14 6" stroke="#c0c0ff" stroke-width="0.8" fill="none"/><circle cx="11" cy="12" r="3.6" fill="#fff" stroke="#2a5ab0" stroke-width="1"/><text x="11" y="14.4" font-family="Liberation Sans" font-weight="bold" font-size="6.5" text-anchor="middle" fill="#1a3a90">?</text></svg>
<div class="t" style="left:82.5px;top:401.5px;font-size:11.5px;color:#6e6a78">Books</div>
<div class="a" style="left:118px;top:400px;width:1px;height:15px;background:#9a9a9a"></div>
<div class="t" style="left:124px;top:400px;font-size:12px;color:#111;-webkit-text-stroke:0.5px #111">{</div><div class="t" style="left:131.5px;top:400px;font-size:12px;color:#111;-webkit-text-stroke:0.5px #111">}</div>
<div class="t" style="left:139.5px;top:401.5px;font-size:11.5px;color:#6e6a78">Func...</div>
<div class="a" style="left:175px;top:400px;width:1px;height:15px;background:#9a9a9a"></div>
<div class="t" style="left:179.5px;top:400px;font-size:12px;color:#111;-webkit-text-stroke:0.45px #111;letter-spacing:-0.2px">()</div>
<svg class="a" style="left:187px;top:407.5px" width="9" height="7" viewBox="0 0 9 7"><path d="M0.5 2.5H5V0.5L8.5 3.5L5 6.5V4.5H0.5Z" fill="#1a40c0"/></svg>
<div class="t" style="left:196px;top:401.5px;font-size:11.5px;color:#6e6a78">Temp...</div>
<div class="a" style="left:232.5px;top:400px;width:1px;height:15px;background:#9a9a9a"></div>

<div class="a" style="left:3px;top:129px;width:215px;height:249px;overflow:hidden"><div class="a" style="left:-3px;top:-129px;width:1000px;height:683px"><div class="a xb" style="left:10.40px;top:135.60px"></div><div class="a" style="left:12.50px;top:139.40px;width:5px;height:1.3px;background:#26407c"></div>
<div class="a dh" style="left:20.00px;top:139.50px;width:4.00px"></div>
<svg class="a" style="left:23.5px;top:130px" width="16" height="15" viewBox="0 0 16 15">
<path d="M4 6.5V11.5H10.5" stroke="#8090a8" stroke-width="1.2" fill="none"/>
<path d="M1 5L6 0.8L9.5 3.8L4.5 8Z" fill="#f0c030" stroke="#9a7810" stroke-width="0.8"/>
<path d="M10 5.5L13.5 3L15.3 5.5L11.8 8Z" fill="#e050e0" stroke="#8a208a" stroke-width="0.7"/>
<path d="M10 11.5L13.5 9L15.3 11.5L11.8 14Z" fill="#4a90e0" stroke="#1a4a9a" stroke-width="0.7"/>
<path d="M9.5 6.5L10.5 5.5M10 11L10.8 10.3" stroke="#8090a8" stroke-width="1"/></svg>
<div class="tree" style="left:48px;top:133.56px">Project: Project</div>
<div class="a dv" style="left:34.10px;top:146.00px;height:9.15px"></div>
<div class="a xb" style="left:30.40px;top:155.25px"></div><div class="a" style="left:32.50px;top:159.05px;width:5px;height:1.3px;background:#26407c"></div>
<div class="a dh" style="left:40.00px;top:159.15px;width:4.00px"></div>
<svg class="a" style="left:43.5px;top:151.5px" width="18" height="14" viewBox="0 0 18 14">
<defs><linearGradient id="ofg" x1="0" y1="0" x2="1" y2="1"><stop offset="0" stop-color="#fff4b8"/><stop offset=".6" stop-color="#f4cc50"/><stop offset="1" stop-color="#cf9010"/></linearGradient></defs>
<path d="M1.5 12V1.5Q1.5 0.8 2.2 0.8H6L7.2 2H13.5Q14.2 2 14.2 2.7V5" fill="#fbe89a" stroke="#7d6420" stroke-width="0.9"/>
<path d="M1.5 12.5L4.2 5.2H16.8L14.2 12.5Z" fill="url(#ofg)" stroke="#7d6420" stroke-width="0.9"/>
<g transform="translate(3.6,10.4)" fill="#111"><circle r="2.1"/><g stroke="#111" stroke-width="1.1"><path d="M0 -3.4V3.4M-3.4 0H3.4M-2.4 -2.4L2.4 2.4M2.4 -2.4L-2.4 2.4"/></g><circle r="0.9" fill="#fff"/></g></svg>
<div class="tree" style="left:66.4px;top:153.21px;letter-spacing:-0.45px">IMXRT1060-EVK</div>
<div class="a dv" style="left:54.00px;top:166.00px;height:190.15px"></div>
<div class="a xb" style="left:49.90px;top:174.90px"></div><div class="a" style="left:52.00px;top:178.70px;width:5px;height:1.3px;background:#26407c"></div><div class="a" style="left:53.85px;top:176.80px;width:1.3px;height:5px;background:#26407c"></div>
<div class="a dh" style="left:59.50px;top:178.80px;width:5.50px"></div>
<svg class="a" style="left:64.5px;top:171.70px" width="14.2" height="12.2" viewBox="0 0 15 13">
<defs><linearGradient id="fg2" x1="0" y1="0" x2="1" y2="1"><stop offset="0" stop-color="#fffbe0"/><stop offset=".5" stop-color="#fbe17a"/><stop offset="1" stop-color="#e2a82a"/></linearGradient></defs>
<path d="M0.7 12.3V1.4Q0.7 0.7 1.4 0.7H5.2L6.4 2H13.6Q14.3 2 14.3 2.7V12.3Z" fill="url(#fg2)" stroke="#7d6420" stroke-width="1"/>
<path d="M1.2 3.2H13.8" stroke="#fff2a8" stroke-width="0.8"/></svg>
<div class="tree" style="left:86.5px;top:172.86px;letter-spacing:0px">board</div>
<div class="a xb" style="left:49.90px;top:194.55px"></div><div class="a" style="left:52.00px;top:198.35px;width:5px;height:1.3px;background:#26407c"></div><div class="a" style="left:53.85px;top:196.45px;width:1.3px;height:5px;background:#26407c"></div>
<div class="a dh" style="left:59.50px;top:198.45px;width:5.50px"></div>
<svg class="a" style="left:64.5px;top:191.35px" width="14.2" height="12.2" viewBox="0 0 15 13">
<defs><linearGradient id="fg3" x1="0" y1="0" x2="1" y2="1"><stop offset="0" stop-color="#fffbe0"/><stop offset=".5" stop-color="#fbe17a"/><stop offset="1" stop-color="#e2a82a"/></linearGradient></defs>
<path d="M0.7 12.3V1.4Q0.7 0.7 1.4 0.7H5.2L6.4 2H13.6Q14.3 2 14.3 2.7V12.3Z" fill="url(#fg3)" stroke="#7d6420" stroke-width="1"/>
<path d="M1.2 3.2H13.8" stroke="#fff2a8" stroke-width="0.8"/></svg>
<div class="tree" style="left:86.5px;top:192.51px;letter-spacing:0px">EmbeddedWizard/TargetSpecific</div>
<div class="a xb" style="left:49.90px;top:214.20px"></div><div class="a" style="left:52.00px;top:218.00px;width:5px;height:1.3px;background:#26407c"></div><div class="a" style="left:53.85px;top:216.10px;width:1.3px;height:5px;background:#26407c"></div>
<div class="a dh" style="left:59.50px;top:218.10px;width:5.50px"></div>
<svg class="a" style="left:64.5px;top:211.00px" width="14.2" height="12.2" viewBox="0 0 15 13">
<defs><linearGradient id="fg4" x1="0" y1="0" x2="1" y2="1"><stop offset="0" stop-color="#fffbe0"/><stop offset=".5" stop-color="#fbe17a"/><stop offset="1" stop-color="#e2a82a"/></linearGradient></defs>
<path d="M0.7 12.3V1.4Q0.7 0.7 1.4 0.7H5.2L6.4 2H13.6Q14.3 2 14.3 2.7V12.3Z" fill="url(#fg4)" stroke="#7d6420" stroke-width="1"/>
<path d="M1.2 3.2H13.8" stroke="#fff2a8" stroke-width="0.8"/></svg>
<div class="tree" style="left:86.5px;top:212.16px;letter-spacing:0px">EmbeddedWizard/Application</div>
<div class="a xb" style="left:49.90px;top:233.85px"></div><div class="a" style="left:52.00px;top:237.65px;width:5px;height:1.3px;background:#26407c"></div><div class="a" style="left:53.85px;top:235.75px;width:1.3px;height:5px;background:#26407c"></div>
<div class="a dh" style="left:59.50px;top:237.75px;width:5.50px"></div>
<svg class="a" style="left:63.8px;top:227.75px" width="15" height="15" viewBox="0 0 15 15">
<path d="M7.5 0.6L14.3 7.5L7.5 14.4L0.7 7.5Z" fill="#0adf0a" stroke="#111" stroke-width="0.9"/>
<circle cx="7.5" cy="4.4" r="1.25" fill="#000"/><circle cx="4.4" cy="7.5" r="1.25" fill="#000"/><circle cx="10.6" cy="7.5" r="1.25" fill="#000"/><circle cx="7.5" cy="10.6" r="1.25" fill="#000"/></svg>
<div class="tree" style="left:86.5px;top:231.81px;letter-spacing:0px">EmbeddedWizard/GeneratedCode</div>
<div class="a xb" style="left:49.90px;top:253.50px"></div><div class="a" style="left:52.00px;top:257.30px;width:5px;height:1.3px;background:#26407c"></div><div class="a" style="left:53.85px;top:255.40px;width:1.3px;height:5px;background:#26407c"></div>
<div class="a dh" style="left:59.50px;top:257.40px;width:5.50px"></div>
<svg class="a" style="left:63.8px;top:247.40px" width="15" height="15" viewBox="0 0 15 15">
<path d="M7.5 0.6L14.3 7.5L7.5 14.4L0.7 7.5Z" fill="#0adf0a" stroke="#111" stroke-width="0.9"/>
<circle cx="7.5" cy="4.4" r="1.25" fill="#000"/><circle cx="4.4" cy="7.5" r="1.25" fill="#000"/><circle cx="10.6" cy="7.5" r="1.25" fill="#000"/><circle cx="7.5" cy="10.6" r="1.25" fill="#000"/></svg>
<div class="tree" style="left:86.5px;top:251.46px;letter-spacing:0px">EmbeddedWizard/PlatformPackage</div>
<div class="a xb" style="left:49.90px;top:273.15px"></div><div class="a" style="left:52.00px;top:276.95px;width:5px;height:1.3px;background:#26407c"></div><div class="a" style="left:53.85px;top:275.05px;width:1.3px;height:5px;background:#26407c"></div>
<div class="a dh" style="left:59.50px;top:277.05px;width:5.50px"></div>
<svg class="a" style="left:63.8px;top:267.05px" width="15" height="15" viewBox="0 0 15 15">
<path d="M7.5 0.6L14.3 7.5L7.5 14.4L0.7 7.5Z" fill="#0adf0a" stroke="#111" stroke-width="0.9"/>
<circle cx="7.5" cy="4.4" r="1.25" fill="#000"/><circle cx="4.4" cy="7.5" r="1.25" fill="#000"/><circle cx="10.6" cy="7.5" r="1.25" fill="#000"/><circle cx="7.5" cy="10.6" r="1.25" fill="#000"/></svg>
<div class="tree" style="left:86.5px;top:271.11px;letter-spacing:0px">drivers</div>
<div class="a xb" style="left:49.90px;top:292.80px"></div><div class="a" style="left:52.00px;top:296.60px;width:5px;height:1.3px;background:#26407c"></div><div class="a" style="left:53.85px;top:294.70px;width:1.3px;height:5px;background:#26407c"></div>
<div class="a dh" style="left:59.50px;top:296.70px;width:5.50px"></div>
<svg class="a" style="left:63.8px;top:286.70px" width="15" height="15" viewBox="0 0 15 15">
<path d="M7.5 0.6L14.3 7.5L7.5 14.4L0.7 7.5Z" fill="#0adf0a" stroke="#111" stroke-width="0.9"/>
<circle cx="7.5" cy="4.4" r="1.25" fill="#000"/><circle cx="4.4" cy="7.5" r="1.25" fill="#000"/><circle cx="10.6" cy="7.5" r="1.25" fill="#000"/><circle cx="7.5" cy="10.6" r="1.25" fill="#000"/></svg>
<div class="tree" style="left:86.5px;top:290.76px;letter-spacing:-0.1px">startup</div>
<div class="a xb" style="left:49.90px;top:312.45px"></div><div class="a" style="left:52.00px;top:316.25px;width:5px;height:1.3px;background:#26407c"></div><div class="a" style="left:53.85px;top:314.35px;width:1.3px;height:5px;background:#26407c"></div>
<div class="a dh" style="left:59.50px;top:316.35px;width:5.50px"></div>
<svg class="a" style="left:63.8px;top:306.35px" width="15" height="15" viewBox="0 0 15 15">
<path d="M7.5 0.6L14.3 7.5L7.5 14.4L0.7 7.5Z" fill="#0adf0a" stroke="#111" stroke-width="0.9"/>
<circle cx="7.5" cy="4.4" r="1.25" fill="#000"/><circle cx="4.4" cy="7.5" r="1.25" fill="#000"/><circle cx="10.6" cy="7.5" r="1.25" fill="#000"/><circle cx="7.5" cy="10.6" r="1.25" fill="#000"/></svg>
<div class="tree" style="left:86.5px;top:310.41px;letter-spacing:0px">utilities</div>
<div class="a xb" style="left:49.90px;top:332.10px"></div><div class="a" style="left:52.00px;top:335.90px;width:5px;height:1.3px;background:#26407c"></div><div class="a" style="left:53.85px;top:334.00px;width:1.3px;height:5px;background:#26407c"></div>
<div class="a dh" style="left:59.50px;top:336.00px;width:5.50px"></div>
<svg class="a" style="left:63.8px;top:326.00px" width="15" height="15" viewBox="0 0 15 15">
<path d="M7.5 0.6L14.3 7.5L7.5 14.4L0.7 7.5Z" fill="#0adf0a" stroke="#111" stroke-width="0.9"/>
<circle cx="7.5" cy="4.4" r="1.25" fill="#000"/><circle cx="4.4" cy="7.5" r="1.25" fill="#000"/><circle cx="10.6" cy="7.5" r="1.25" fill="#000"/><circle cx="7.5" cy="10.6" r="1.25" fill="#000"/></svg>
<div class="tree" style="left:86.5px;top:330.06px;letter-spacing:0px">xip</div>
<div class="a xb" style="left:49.90px;top:351.75px"></div><div class="a" style="left:52.00px;top:355.55px;width:5px;height:1.3px;background:#26407c"></div><div class="a" style="left:53.85px;top:353.65px;width:1.3px;height:5px;background:#26407c"></div>
<div class="a dh" style="left:59.50px;top:355.65px;width:5.50px"></div>
<svg class="a" style="left:63.8px;top:345.65px" width="15" height="15" viewBox="0 0 15 15">
<path d="M7.5 0.6L14.3 7.5L7.5 14.4L0.7 7.5Z" fill="#0adf0a" stroke="#111" stroke-width="0.9"/>
<circle cx="7.5" cy="4.4" r="1.25" fill="#000"/><circle cx="4.4" cy="7.5" r="1.25" fill="#000"/><circle cx="10.6" cy="7.5" r="1.25" fill="#000"/><circle cx="7.5" cy="10.6" r="1.25" fill="#000"/></svg>
<div class="tree" style="left:86.5px;top:349.71px;letter-spacing:-0.7px">FreeRTOS</div></div></div>
<!-- editor gray -->
<div class="a" style="left:242px;top:107.5px;width:758px;height:310.5px;background:#ababab;border-top:1px solid #9a9a9a;border-bottom:1px solid #9c9c9c"></div>

<!-- build output -->
<div class="a" style="left:2px;top:422.8px;width:998px;height:18.7px;background:linear-gradient(#b9c8d6,#d5e1ec)"></div>
<div class="a" style="left:2px;top:441.5px;width:998px;height:1.8px;background:#f4f8fb"></div>
<div class="t" style="left:5.6px;top:427.5px;font-size:12px">Build Output</div>
<div class="a" style="left:2.5px;top:443.3px;width:997.5px;height:218px;border-top:1.8px solid #333;border-left:1.7px solid #4c515c;background:#fff"></div>
<div class="out" style="top:446.6px">compiling fsl_str.c...
compiling port.c...
compiling timers.c...
compiling heap_4.c...
compiling queue.c...
compiling tasks.c...
compiling Core.c...
linking...
Program Size: Code=225398 RO-data=53158 RW-data=96 ZI-data=813516
FromELF: creating hex file...
".\IMXRT1060-EVK\EmbeddedWizard-IMXRT1060-EVK.elf" - 0 Error(s), 0 Warning(s).
Build Time Elapsed:  00:00:03</div>
<div class="a" style="left:4.8px;top:598.7px;width:664.6px;height:23px;border:2.6px solid #f01216;border-radius:3.5px;box-shadow:0 0 1.5px rgba(0,0,0,.35), inset 0 -1.5px 1.5px rgba(120,170,170,.35)"></div>
<div class="a" style="left:5px;top:645.5px;width:995px;height:15.5px;background:#f0f0f0"></div>
<svg class="a" style="left:7px;top:647.5px" width="10" height="11"><path d="M8 1.5V9.5L2.5 5.5Z" fill="#8e8e8e" stroke="#8e8e8e" stroke-width="0.8" stroke-linejoin="round"/></svg>

<!-- status bar -->
<div class="a" style="left:0;top:661px;width:1000px;height:22px;background:#f0f0f0"></div>
<div class="a" style="left:2px;top:662px;width:998px;height:1px;background:#e4e4e4"></div>
<div class="a" style="left:2px;top:663.7px;width:998px;height:1.8px;background:#d8d8d8"></div>
<div class="a" style="left:743px;top:666px;width:1px;height:16px;background:#d0d0d0"></div>
<div class="a" style="left:917.5px;top:666px;width:1px;height:16px;background:#d0d0d0"></div>
<div class="t" style="left:747.5px;top:669px;font-size:11.5px;letter-spacing:-0.36px">CMSIS-DAP Debugger</div>
<div class="a" style="left:0;top:680.6px;width:1000px;height:1px;background:#f8fbff"></div>
<div class="a" style="left:0;top:681.6px;width:1000px;height:1.4px;background:#f2a200"></div>

<svg class="a" style="left:0;top:0" width="200" height="140" viewBox="0 0 200 140">
<defs><filter id="sh" x="-20%" y="-20%" width="140%" height="140%"><feGaussianBlur stdDeviation="1.2"/></filter></defs>
<polygon points="59.2,84.4 82.8,67.2 85.2,76.4 119.6,70 120.8,75.2 86.8,83.2 87.6,91.6" transform="translate(0.8,1.6)" fill="#000" opacity=".35" stroke="#000" stroke-width="3" stroke-linejoin="round" filter="url(#sh)"/>
<polygon points="59.2,84.4 82.8,67.2 85.2,76.4 119.6,70 120.8,75.2 86.8,83.2 87.6,91.6" fill="#fff" stroke="#f4fbfb" stroke-width="3.4" stroke-linejoin="round"/>
<polygon points="59.2,84.4 82.8,67.2 85.2,76.4 119.6,70 120.8,75.2 86.8,83.2 87.6,91.6" fill="#ff0000"/>
<path d="M47.6 102.9V125.4L52 121L56 128L60.2 126.6L57.2 120.5H64.6Z" fill="#fff" stroke="#000" stroke-width="1.1" stroke-linejoin="round"/>
</svg>
<!-- left window border -->
<div class="a" style="left:0;top:30px;width:2px;height:653px;background:linear-gradient(#f08c00 0,#f4a000 80px,#f6a600 380px,#fcc000 430px,#ffc800 600px,#f8b000 650px,#f29400 100%)"></div>
<svg class="a" style="left:0;top:0" width="8" height="8"><path d="M0 0H8V0.2Q0.5 0.5 0.2 8H0Z" fill="#eed59a"/><path d="M0 6Q0 0 6 0H0Z" fill="#efd9a4"/></svg>
<svg class="a" style="left:0;top:674px" width="10" height="9"><path d="M0 9V0H2V3Q2 7.5 6.5 7.5H10V9Z" fill="#f29400"/><path d="M0 4Q0.2 8.8 5 9H0Z" fill="#c9b27a"/><path d="M2.3 2.5Q2.5 7.2 7 7.3H10" stroke="#fff" stroke-width="0.8" fill="none"/></svg>
</body></html>
